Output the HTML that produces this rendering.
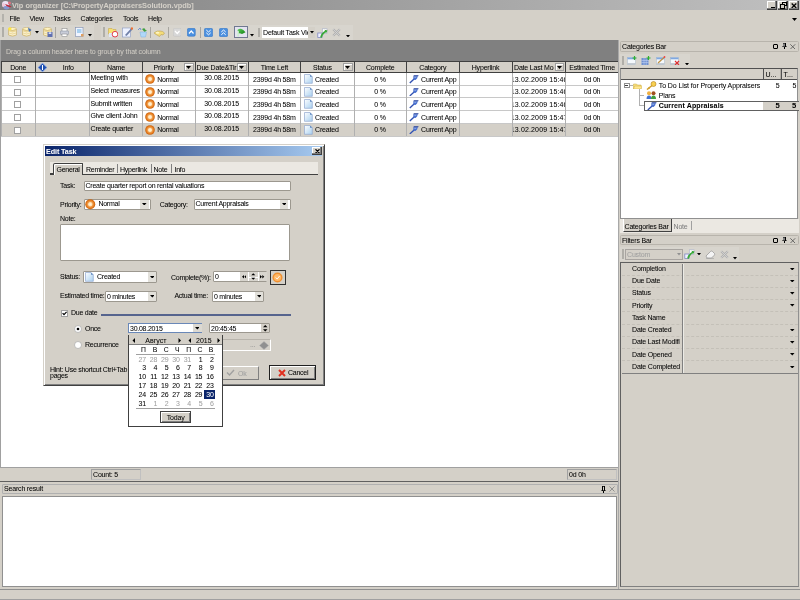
<!DOCTYPE html>
<html><head><meta charset="utf-8"><style>
html,body{margin:0;padding:0;width:800px;height:600px;overflow:hidden;background:#d4d0c8;font-family:"Liberation Sans",sans-serif;}
.a{position:absolute}
.t{position:absolute;white-space:nowrap;font-size:7px;line-height:9px;color:#000;letter-spacing:-0.18px;-webkit-text-stroke:0.04px currentColor}
#root{position:absolute;left:0;top:0;width:800px;height:600px;overflow:hidden;background:#d4d0c8;will-change:transform}
</style></head><body><div id="root">
<div class="a" style="left:0px;top:0px;width:800px;height:10px;background:linear-gradient(to right,#808080,#c0c0c0)"></div>
<svg class="a" style="left:1px;top:0.3px;" width="11" height="9.5" viewBox="0 0 11 9.5"><ellipse cx="4.5" cy="4.2" rx="3.5" ry="3.2" fill="#ece4f4"/><ellipse cx="2.5" cy="5" rx="1.5" ry="2" fill="#f0c8d8"/><ellipse cx="5.5" cy="7.6" rx="3" ry="1.8" fill="#8898d0"/><path d="M4 4Q7 4.5 10.5 6.5Q9 8 5.5 6Z" fill="#c02838"/><circle cx="8.5" cy="3" r="1.5" fill="#e07080"/></svg>
<div class="t" style="left:12px;top:1px;font-weight:bold;color:#d4d0c8;font-size:7.4px;letter-spacing:0">Vip organizer [C:\PropertyAppraisersSolution.vpdb]</div>
<div class="a" style="left:767px;top:0.5px;width:10px;height:9.5px;background:#d4d0c8;border-right:1px solid #404040;border-bottom:1px solid #404040;box-shadow:inset -1px -1px #808080, inset 1px 1px #fff;box-sizing:border-box"></div>
<div class="a" style="left:777.5px;top:0.5px;width:10px;height:9.5px;background:#d4d0c8;border-right:1px solid #404040;border-bottom:1px solid #404040;box-shadow:inset -1px -1px #808080, inset 1px 1px #fff;box-sizing:border-box"></div>
<div class="a" style="left:788.5px;top:0.5px;width:10px;height:9.5px;background:#d4d0c8;border-right:1px solid #404040;border-bottom:1px solid #404040;box-shadow:inset -1px -1px #808080, inset 1px 1px #fff;box-sizing:border-box"></div>
<div class="a" style="left:770.5px;top:6.5px;width:4px;height:1.5px;background:#000"></div>
<div class="a" style="left:781.5px;top:2px;width:5px;height:4px;border:1px solid #000;border-top-width:1.5px;box-sizing:border-box"></div>
<div class="a" style="left:779.5px;top:4px;width:5px;height:4.5px;border:1px solid #000;border-top-width:1.5px;background:#d4d0c8;box-sizing:border-box"></div>
<svg class="a" style="left:790.5px;top:2.5px;" width="6" height="5.5" viewBox="0 0 6 5.5"><path d="M0.7 0.5L5.3 5M5.3 0.5L0.7 5" stroke="#000" stroke-width="1.3"/></svg>
<div class="a" style="left:2px;top:13.5px;width:2px;height:8.5px;background:#b4b2ac"></div>
<div class="t" style="left:9.5px;top:13.5px;">File</div>
<div class="t" style="left:29.5px;top:13.5px;">View</div>
<div class="t" style="left:53.5px;top:13.5px;">Tasks</div>
<div class="t" style="left:80.5px;top:13.5px;">Categories</div>
<div class="t" style="left:123px;top:13.5px;">Tools</div>
<div class="t" style="left:148px;top:13.5px;">Help</div>
<svg class="a" style="left:792px;top:18px;" width="6" height="4" viewBox="0 0 6 4"><path d="M0 0H5L2.5 3Z" fill="#000"/></svg>
<div class="a" style="left:0px;top:25px;width:94px;height:14.5px;background:#d8d5ce"></div>
<div class="a" style="left:101px;top:25px;width:252px;height:14.5px;background:#d8d5ce"></div>
<div class="a" style="left:2px;top:27px;width:2px;height:10px;background:#b0aea8"></div>
<svg class="a" style="left:7.5px;top:27px;" width="9.5" height="10" viewBox="0 0 9.5 10"><ellipse cx="4.5" cy="2.2" rx="4" ry="1.8" fill="#fff4c0" stroke="#c8b070" stroke-width="0.6"/><path d="M0.5 2.2V8Q4.5 10.5 8.5 8V2.2Q4.5 4.8 0.5 2.2Z" fill="#ecd898" stroke="#c8b070" stroke-width="0.6"/><path d="M1 5Q4.5 7 8 5M1 7Q4.5 9 8 7" stroke="#fffbe8" stroke-width="0.7" fill="none"/><circle cx="1.8" cy="1.8" r="1.6" fill="#ffe840"/></svg>
<svg class="a" style="left:22px;top:27px;" width="10" height="10" viewBox="0 0 10 10"><ellipse cx="4.5" cy="2.2" rx="4" ry="1.8" fill="#fff4c0" stroke="#c8b070" stroke-width="0.6"/><path d="M0.5 2.2V8Q4.5 10.5 8.5 8V2.2Q4.5 4.8 0.5 2.2Z" fill="#ecd898" stroke="#c8b070" stroke-width="0.6"/><path d="M1 5Q4.5 7 8 5M1 7Q4.5 9 8 7" stroke="#fffbe8" stroke-width="0.7" fill="none"/><path d="M6 0.5L9.5 3L7 5Z" fill="#4070c0"/></svg>
<svg class="a" style="left:35px;top:31px;" width="4" height="2.5" viewBox="0 0 4 2.5"><path d="M0 0H4L2 2.5Z" fill="#000"/></svg>
<svg class="a" style="left:42.5px;top:27px;" width="10" height="10.5" viewBox="0 0 10 10.5"><ellipse cx="4.5" cy="2.2" rx="4" ry="1.8" fill="#fff4c0" stroke="#c8b070" stroke-width="0.6"/><path d="M0.5 2.2V8Q4.5 10.5 8.5 8V2.2Q4.5 4.8 0.5 2.2Z" fill="#ecd898" stroke="#c8b070" stroke-width="0.6"/><path d="M1 5Q4.5 7 8 5M1 7Q4.5 9 8 7" stroke="#fffbe8" stroke-width="0.7" fill="none"/><rect x="4.5" y="5" width="5" height="5" fill="#6070b0"/><rect x="5.7" y="5.3" width="2.6" height="1.6" fill="#e0e8ff"/></svg>
<div class="a" style="left:55px;top:26.5px;width:1.2px;height:11.5px;background:#a8a6a0"></div>
<svg class="a" style="left:60px;top:28px;" width="9" height="9" viewBox="0 0 9 9"><rect x="2" y="0.5" width="5" height="3" fill="#fff" stroke="#909090" stroke-width="0.6"/><rect x="0.3" y="3" width="8.4" height="3.5" rx="1" fill="#c8ccd8" stroke="#8890a0" stroke-width="0.6"/><rect x="2" y="6" width="5" height="2.5" fill="#fff" stroke="#909090" stroke-width="0.6"/></svg>
<svg class="a" style="left:75px;top:27px;" width="9" height="10" viewBox="0 0 9 10"><rect x="0.5" y="0.5" width="7.5" height="9" fill="#f0f4ff" stroke="#8090b0" stroke-width="0.6"/><rect x="2" y="2" width="4.5" height="4" fill="#a8d0f0"/><rect x="6" y="7" width="2.5" height="2.5" fill="#e0a060"/></svg>
<svg class="a" style="left:88px;top:34px;" width="4" height="2.5" viewBox="0 0 4 2.5"><path d="M0 0H4L2 2.5Z" fill="#000"/></svg>
<div class="a" style="left:103px;top:27px;width:2px;height:10px;background:#b0aea8"></div>
<svg class="a" style="left:108px;top:27px;" width="10" height="10.5" viewBox="0 0 10 10.5"><path d="M0.5 1.5H4L5 2.5H8V7H0.5Z" fill="#f8e070" stroke="#c0a040" stroke-width="0.5"/><rect x="1" y="6" width="3" height="4" fill="#e0e8f8"/><circle cx="7" cy="7.2" r="2.8" fill="#fff" stroke="#e04050" stroke-width="1"/></svg>
<svg class="a" style="left:122px;top:27px;" width="11" height="10.5" viewBox="0 0 11 10.5"><rect x="0.5" y="1" width="8" height="9" fill="#eef2ff" stroke="#8898c0" stroke-width="0.6"/><path d="M3 8L9 1.5L10.5 2.5L4.5 9Z" fill="#7080a8"/><circle cx="10" cy="1.5" r="1.2" fill="#f07030"/></svg>
<svg class="a" style="left:136.5px;top:27px;" width="11" height="10.5" viewBox="0 0 11 10.5"><path d="M1 3L3 1L4 3" stroke="#7090d0" stroke-width="1" fill="none"/><path d="M5 2Q8 0 8.5 3L10 3.5L7.5 5" fill="#40a040"/><path d="M3 5H9.5L8.5 10H4Z" fill="#b0d8f8" stroke="#80b0e0" stroke-width="0.5"/></svg>
<div class="a" style="left:150px;top:26.5px;width:1.2px;height:11.5px;background:#a8a6a0"></div>
<svg class="a" style="left:154px;top:29.5px;" width="11" height="7" viewBox="0 0 11 7"><path d="M0.5 2.5Q3 0.5 6 1Q9 1 10.5 3L9 5L7 4.5L5.5 6.5Q3 5 0.5 3.5Z" fill="#f4dc78" stroke="#b8a050" stroke-width="0.6"/><ellipse cx="3.5" cy="2.8" rx="1.8" ry="1" fill="#fff4c0"/></svg>
<div class="a" style="left:168px;top:26.5px;width:1.2px;height:11.5px;background:#a8a6a0"></div>
<svg class="a" style="left:172.5px;top:28px;" width="8.5" height="8.5" viewBox="0 0 8.5 8.5"><rect x="0.3" y="0.3" width="8" height="8" rx="1.5" fill="#d8d8d8" stroke="#c0c0c0" stroke-width="0.5"/><path d="M2 3L4.25 5.5L6.5 3" stroke="#fff" stroke-width="1.2" fill="none"/></svg>
<svg class="a" style="left:187px;top:28px;" width="8.5" height="8.5" viewBox="0 0 8.5 8.5"><rect x="0.3" y="0.3" width="8" height="8" rx="1.5" fill="#4a90e0" stroke="#3070c0" stroke-width="0.5"/><path d="M2 5.5L4.25 3L6.5 5.5" stroke="#fff" stroke-width="1.2" fill="none"/></svg>
<div class="a" style="left:200px;top:26.5px;width:1.2px;height:11.5px;background:#a8a6a0"></div>
<svg class="a" style="left:204px;top:28px;" width="9" height="9" viewBox="0 0 9 9"><rect x="0.3" y="0.3" width="8.4" height="8.4" rx="1.5" fill="#4a90e0" stroke="#3070c0" stroke-width="0.5"/><path d="M2.3 2L4.5 4L6.7 2M2.3 4.8L4.5 6.8L6.7 4.8" stroke="#fff" stroke-width="1" fill="none"/></svg>
<svg class="a" style="left:218.5px;top:28px;" width="9" height="9" viewBox="0 0 9 9"><rect x="0.3" y="0.3" width="8.4" height="8.4" rx="1.5" fill="#4a90e0" stroke="#3070c0" stroke-width="0.5"/><path d="M2.3 4L4.5 2L6.7 4M2.3 6.8L4.5 4.8L6.7 6.8" stroke="#fff" stroke-width="1" fill="none"/></svg>
<div class="a" style="left:233.8px;top:25.8px;width:14px;height:12.5px;background:#e4e4f0;border:1px solid #707890;box-sizing:border-box"></div>
<svg class="a" style="left:235.5px;top:27.5px;" width="11" height="9" viewBox="0 0 11 9"><defs><linearGradient id="fg" x1="0" y1="0" x2="1" y2="1"><stop offset="0" stop-color="#60d060"/><stop offset="1" stop-color="#108010"/></linearGradient></defs><path d="M1.5 2Q3 0.5 5 0.8Q7.5 1.5 9.5 4.2L6 6Q4 5 2.5 5.5Z" fill="url(#fg)"/><path d="M2 2.5Q1 5 1.5 8.5H3Q2.5 5 3 3.5Z" fill="#c8f0c8"/></svg>
<svg class="a" style="left:250px;top:34px;" width="4" height="2.5" viewBox="0 0 4 2.5"><path d="M0 0H4L2 2.5Z" fill="#000"/></svg>
<div class="a" style="left:258px;top:27.5px;width:2px;height:9.5px;background:#b0aea8"></div>
<div class="a" style="left:262px;top:27px;width:52.5px;height:11px;background:#fff"></div>
<div class="a" style="left:308px;top:27px;width:6.5px;height:11px;background:#d4d0c8"></div>
<svg class="a" style="left:309.5px;top:31px;" width="4" height="2.5" viewBox="0 0 4 2.5"><path d="M0 0H4L2 2.5Z" fill="#000"/></svg>
<div class="t" style="left:263px;top:28px;width:45px;overflow:hidden">Default Task View</div>
<svg class="a" style="left:316.5px;top:27.5px;" width="11" height="10" viewBox="0 0 11 10"><rect x="5.5" y="0.8" width="4.5" height="4.5" fill="#fff" stroke="#a8b0c8" stroke-width="0.6"/><rect x="0.8" y="5" width="4.2" height="4.5" fill="#eef0ff" stroke="#8088c0" stroke-width="0.8"/><path d="M4 9.5Q5 5 9.5 3" stroke="#38a838" stroke-width="1.8" fill="none"/><path d="M7.5 1.8L10.5 2.5L9 5.3Z" fill="#38a838"/></svg>
<svg class="a" style="left:331.5px;top:27.5px;" width="9" height="9" viewBox="0 0 9 9"><path d="M1.2 1.2L7.8 7.8M7.8 1.2L1.2 7.8" stroke="#b0b0b0" stroke-width="2.2"/><path d="M1.2 1.2L7.8 7.8M7.8 1.2L1.2 7.8" stroke="#d8d8d8" stroke-width="0.8"/></svg>
<svg class="a" style="left:345.5px;top:34.5px;" width="4" height="2.5" viewBox="0 0 4 2.5"><path d="M0 0H4L2 2.5Z" fill="#000"/></svg>
<div class="a" style="left:0px;top:40px;width:618.5px;height:21px;background:#808080"></div>
<div class="t" style="left:6px;top:47px;color:#d0ccc4;letter-spacing:-0.12px">Drag a column header here to group by that column</div>
<div class="a" style="left:0px;top:61px;width:619px;height:420.5px;background:#fff"></div>
<div class="a" style="left:0px;top:40px;width:1px;height:442px;background:#a0a0a0"></div>
<div class="a" style="left:1px;top:61px;width:617.5px;height:11.5px;background:#d4d0c8;border-top:1px solid #404040;border-bottom:1px solid #404040;box-sizing:border-box"></div>
<div class="a" style="left:0.5px;top:61px;width:1px;height:11.5px;background:#404040"></div>
<div class="a" style="left:35.0px;top:61px;width:1px;height:11.5px;background:#404040"></div>
<div class="a" style="left:89.0px;top:61px;width:1px;height:11.5px;background:#404040"></div>
<div class="a" style="left:142.0px;top:61px;width:1px;height:11.5px;background:#404040"></div>
<div class="a" style="left:194.5px;top:61px;width:1px;height:11.5px;background:#404040"></div>
<div class="a" style="left:247.5px;top:61px;width:1px;height:11.5px;background:#404040"></div>
<div class="a" style="left:300.3px;top:61px;width:1px;height:11.5px;background:#404040"></div>
<div class="a" style="left:353.5px;top:61px;width:1px;height:11.5px;background:#404040"></div>
<div class="a" style="left:406.0px;top:61px;width:1px;height:11.5px;background:#404040"></div>
<div class="a" style="left:458.5px;top:61px;width:1px;height:11.5px;background:#404040"></div>
<div class="a" style="left:511.5px;top:61px;width:1px;height:11.5px;background:#404040"></div>
<div class="a" style="left:565.0px;top:61px;width:1px;height:11.5px;background:#404040"></div>
<div class="a" style="left:618.0px;top:61px;width:1px;height:11.5px;background:#404040"></div>
<div class="a" style="left:1px;top:123.3px;width:617.5px;height:12.7px;background:#d4d0c8"></div>
<div class="a" style="left:1px;top:84.7px;width:617.5px;height:1px;background:#c8c8c8"></div>
<div class="a" style="left:1px;top:97.4px;width:617.5px;height:1px;background:#c8c8c8"></div>
<div class="a" style="left:1px;top:110.1px;width:617.5px;height:1px;background:#c8c8c8"></div>
<div class="a" style="left:1px;top:122.8px;width:617.5px;height:1px;background:#c8c8c8"></div>
<div class="a" style="left:1px;top:135.5px;width:617.5px;height:1px;background:#c8c8c8"></div>
<div class="a" style="left:0.5px;top:72.5px;width:1px;height:63.5px;background:#b0b0b0"></div>
<div class="a" style="left:35.0px;top:72.5px;width:1px;height:63.5px;background:#b0b0b0"></div>
<div class="a" style="left:89.0px;top:72.5px;width:1px;height:63.5px;background:#b0b0b0"></div>
<div class="a" style="left:142.0px;top:72.5px;width:1px;height:63.5px;background:#b0b0b0"></div>
<div class="a" style="left:194.5px;top:72.5px;width:1px;height:63.5px;background:#b0b0b0"></div>
<div class="a" style="left:247.5px;top:72.5px;width:1px;height:63.5px;background:#b0b0b0"></div>
<div class="a" style="left:300.3px;top:72.5px;width:1px;height:63.5px;background:#b0b0b0"></div>
<div class="a" style="left:353.5px;top:72.5px;width:1px;height:63.5px;background:#b0b0b0"></div>
<div class="a" style="left:406.0px;top:72.5px;width:1px;height:63.5px;background:#b0b0b0"></div>
<div class="a" style="left:458.5px;top:72.5px;width:1px;height:63.5px;background:#b0b0b0"></div>
<div class="a" style="left:511.5px;top:72.5px;width:1px;height:63.5px;background:#b0b0b0"></div>
<div class="a" style="left:565.0px;top:72.5px;width:1px;height:63.5px;background:#b0b0b0"></div>
<div class="a" style="left:618.0px;top:72.5px;width:1px;height:63.5px;background:#b0b0b0"></div>
<div class="a" style="left:0.5px;top:61px;width:1px;height:11.5px;background:#404040"></div>
<div class="t" style="left:1px;top:62.7px;width:34.5px;text-align:center;">Done</div>
<svg class="a" style="left:38px;top:63px;" width="9" height="9" viewBox="0 0 9 9"><path d="M4.5 0L9 4.5L4.5 9L0 4.5Z" fill="#2050b0" stroke="#a8c0f0" stroke-width="0.8"/><rect x="4" y="2" width="1" height="5" fill="#fff"/></svg>
<div class="t" style="left:47px;top:62.7px;width:42.5px;text-align:center;">Info</div>
<div class="t" style="left:89.5px;top:62.7px;width:53.0px;text-align:center;">Name</div>
<div class="t" style="left:142.5px;top:62.7px;width:42.5px;text-align:center;">Priority</div>
<div class="a" style="left:184px;top:63.3px;width:9.5px;height:7.5px;background:#d4d0c8;border:1px solid #a0a0a0;box-shadow:inset 1px 1px #fff;box-sizing:border-box"></div>
<svg class="a" style="left:186.3px;top:66px;" width="5" height="2.5" viewBox="0 0 5 2.5"><path d="M0 0H5L2.5 3Z" fill="#000"/></svg>
<div class="t" style="left:195px;top:62.7px;width:43px;text-align:center;">Due Date&amp;Tir</div>
<div class="a" style="left:237px;top:63.3px;width:9.5px;height:7.5px;background:#d4d0c8;border:1px solid #a0a0a0;box-shadow:inset 1px 1px #fff;box-sizing:border-box"></div>
<svg class="a" style="left:239.3px;top:66px;" width="5" height="2.5" viewBox="0 0 5 2.5"><path d="M0 0H5L2.5 3Z" fill="#000"/></svg>
<div class="t" style="left:248px;top:62.7px;width:52.80000000000001px;text-align:center;">Time Left</div>
<div class="t" style="left:300.8px;top:62.7px;width:43.19999999999999px;text-align:center;">Status</div>
<div class="a" style="left:343px;top:63.3px;width:9.5px;height:7.5px;background:#d4d0c8;border:1px solid #a0a0a0;box-shadow:inset 1px 1px #fff;box-sizing:border-box"></div>
<svg class="a" style="left:345.3px;top:66px;" width="5" height="2.5" viewBox="0 0 5 2.5"><path d="M0 0H5L2.5 3Z" fill="#000"/></svg>
<div class="t" style="left:354px;top:62.7px;width:52.5px;text-align:center;">Complete</div>
<div class="t" style="left:406.5px;top:62.7px;width:52.5px;text-align:center;">Category</div>
<div class="t" style="left:459px;top:62.7px;width:53px;text-align:center;">Hyperlink</div>
<div class="t" style="left:512px;top:62.7px;width:43.5px;text-align:center;">Date Last Mo</div>
<div class="a" style="left:554.5px;top:63.3px;width:9.5px;height:7.5px;background:#d4d0c8;border:1px solid #a0a0a0;box-shadow:inset 1px 1px #fff;box-sizing:border-box"></div>
<svg class="a" style="left:556.8px;top:66px;" width="5" height="2.5" viewBox="0 0 5 2.5"><path d="M0 0H5L2.5 3Z" fill="#000"/></svg>
<div class="t" style="left:565.5px;top:62.7px;width:53.0px;text-align:center;">Estimated Time</div>
<div class="a" style="left:14px;top:75.8px;width:7px;height:7px;background:#fff;border:1px solid #a0a0a0;box-sizing:border-box"></div>
<div class="t" style="left:90.5px;top:73.2px;">Meeting with</div>
<svg class="a" style="left:145px;top:74.0px;" width="10" height="10" viewBox="0 0 10 10"><defs><radialGradient id="pg" cx="0.5" cy="0.5" r="0.5"><stop offset="0" stop-color="#fff8e8"/><stop offset="0.35" stop-color="#ffe0b0"/><stop offset="0.5" stop-color="#f0a050"/><stop offset="0.85" stop-color="#e07010"/><stop offset="1" stop-color="#c06010"/></radialGradient></defs><circle cx="5" cy="5" r="4.8" fill="url(#pg)"/></svg>
<div class="t" style="left:157.2px;top:74.5px;">Normal</div>
<div class="t" style="left:195px;top:73.2px;width:53.5px;text-align:center;letter-spacing:0">30.08.2015</div>
<div class="t" style="left:248px;top:74.5px;width:52.80000000000001px;text-align:center;">2399d 4h 58m</div>
<svg class="a" style="left:304px;top:74.0px;" width="9" height="10" viewBox="0 0 9 10"><defs><linearGradient id="dg" x1="0" y1="0" x2="1" y2="1"><stop offset="0" stop-color="#ffffff"/><stop offset="1" stop-color="#a8d0f0"/></linearGradient></defs><path d="M0.5 0.5H6L8.3 2.8V9.3H0.5Z" fill="url(#dg)" stroke="#90a8d0" stroke-width="0.7"/><path d="M6 0.5V2.8H8.3" fill="#6088c0"/></svg>
<div class="t" style="left:315px;top:74.5px;">Created</div>
<div class="t" style="left:354px;top:74.5px;width:52px;text-align:center;">0 %</div>
<svg class="a" style="left:408.7px;top:75.0px;" width="10" height="8.5" viewBox="0 0 10 8.5"><path d="M0.8 7.9L5.6 3.4" stroke="#3050b0" stroke-width="1.4"/><path d="M4.3 1.2H9.3L7.8 2.6H8.9L6.6 5L4.4 4.6Z" fill="#4870d0"/><path d="M4.8 0.3H9.6L9.1 1.2H4.4Z" fill="#203c98"/><path d="M5.3 2.4H7.2" stroke="#b8d0f8" stroke-width="0.6"/></svg>
<div class="t" style="left:421px;top:74.5px;">Current App</div>
<div class="t" style="left:512.5px;top:74.5px;width:52.5px;overflow:hidden;text-indent:-1.8px;letter-spacing:0.15px">13.02.2009 15:46</div>
<div class="t" style="left:565.5px;top:74.5px;width:53.0px;text-align:center;">0d 0h</div>
<div class="a" style="left:14px;top:88.5px;width:7px;height:7px;background:#fff;border:1px solid #a0a0a0;box-sizing:border-box"></div>
<div class="t" style="left:90.5px;top:85.9px;">Select measures</div>
<svg class="a" style="left:145px;top:86.7px;" width="10" height="10" viewBox="0 0 10 10"><defs><radialGradient id="pg" cx="0.5" cy="0.5" r="0.5"><stop offset="0" stop-color="#fff8e8"/><stop offset="0.35" stop-color="#ffe0b0"/><stop offset="0.5" stop-color="#f0a050"/><stop offset="0.85" stop-color="#e07010"/><stop offset="1" stop-color="#c06010"/></radialGradient></defs><circle cx="5" cy="5" r="4.8" fill="url(#pg)"/></svg>
<div class="t" style="left:157.2px;top:87.2px;">Normal</div>
<div class="t" style="left:195px;top:85.9px;width:53.5px;text-align:center;letter-spacing:0">30.08.2015</div>
<div class="t" style="left:248px;top:87.2px;width:52.80000000000001px;text-align:center;">2399d 4h 58m</div>
<svg class="a" style="left:304px;top:86.7px;" width="9" height="10" viewBox="0 0 9 10"><defs><linearGradient id="dg" x1="0" y1="0" x2="1" y2="1"><stop offset="0" stop-color="#ffffff"/><stop offset="1" stop-color="#a8d0f0"/></linearGradient></defs><path d="M0.5 0.5H6L8.3 2.8V9.3H0.5Z" fill="url(#dg)" stroke="#90a8d0" stroke-width="0.7"/><path d="M6 0.5V2.8H8.3" fill="#6088c0"/></svg>
<div class="t" style="left:315px;top:87.2px;">Created</div>
<div class="t" style="left:354px;top:87.2px;width:52px;text-align:center;">0 %</div>
<svg class="a" style="left:408.7px;top:87.7px;" width="10" height="8.5" viewBox="0 0 10 8.5"><path d="M0.8 7.9L5.6 3.4" stroke="#3050b0" stroke-width="1.4"/><path d="M4.3 1.2H9.3L7.8 2.6H8.9L6.6 5L4.4 4.6Z" fill="#4870d0"/><path d="M4.8 0.3H9.6L9.1 1.2H4.4Z" fill="#203c98"/><path d="M5.3 2.4H7.2" stroke="#b8d0f8" stroke-width="0.6"/></svg>
<div class="t" style="left:421px;top:87.2px;">Current App</div>
<div class="t" style="left:512.5px;top:87.2px;width:52.5px;overflow:hidden;text-indent:-1.8px;letter-spacing:0.15px">13.02.2009 15:46</div>
<div class="t" style="left:565.5px;top:87.2px;width:53.0px;text-align:center;">0d 0h</div>
<div class="a" style="left:14px;top:101.2px;width:7px;height:7px;background:#fff;border:1px solid #a0a0a0;box-sizing:border-box"></div>
<div class="t" style="left:90.5px;top:98.60000000000001px;">Submit written</div>
<svg class="a" style="left:145px;top:99.4px;" width="10" height="10" viewBox="0 0 10 10"><defs><radialGradient id="pg" cx="0.5" cy="0.5" r="0.5"><stop offset="0" stop-color="#fff8e8"/><stop offset="0.35" stop-color="#ffe0b0"/><stop offset="0.5" stop-color="#f0a050"/><stop offset="0.85" stop-color="#e07010"/><stop offset="1" stop-color="#c06010"/></radialGradient></defs><circle cx="5" cy="5" r="4.8" fill="url(#pg)"/></svg>
<div class="t" style="left:157.2px;top:99.9px;">Normal</div>
<div class="t" style="left:195px;top:98.60000000000001px;width:53.5px;text-align:center;letter-spacing:0">30.08.2015</div>
<div class="t" style="left:248px;top:99.9px;width:52.80000000000001px;text-align:center;">2399d 4h 58m</div>
<svg class="a" style="left:304px;top:99.4px;" width="9" height="10" viewBox="0 0 9 10"><defs><linearGradient id="dg" x1="0" y1="0" x2="1" y2="1"><stop offset="0" stop-color="#ffffff"/><stop offset="1" stop-color="#a8d0f0"/></linearGradient></defs><path d="M0.5 0.5H6L8.3 2.8V9.3H0.5Z" fill="url(#dg)" stroke="#90a8d0" stroke-width="0.7"/><path d="M6 0.5V2.8H8.3" fill="#6088c0"/></svg>
<div class="t" style="left:315px;top:99.9px;">Created</div>
<div class="t" style="left:354px;top:99.9px;width:52px;text-align:center;">0 %</div>
<svg class="a" style="left:408.7px;top:100.4px;" width="10" height="8.5" viewBox="0 0 10 8.5"><path d="M0.8 7.9L5.6 3.4" stroke="#3050b0" stroke-width="1.4"/><path d="M4.3 1.2H9.3L7.8 2.6H8.9L6.6 5L4.4 4.6Z" fill="#4870d0"/><path d="M4.8 0.3H9.6L9.1 1.2H4.4Z" fill="#203c98"/><path d="M5.3 2.4H7.2" stroke="#b8d0f8" stroke-width="0.6"/></svg>
<div class="t" style="left:421px;top:99.9px;">Current App</div>
<div class="t" style="left:512.5px;top:99.9px;width:52.5px;overflow:hidden;text-indent:-1.8px;letter-spacing:0.15px">13.02.2009 15:46</div>
<div class="t" style="left:565.5px;top:99.9px;width:53.0px;text-align:center;">0d 0h</div>
<div class="a" style="left:14px;top:113.89999999999999px;width:7px;height:7px;background:#fff;border:1px solid #a0a0a0;box-sizing:border-box"></div>
<div class="t" style="left:90.5px;top:111.3px;">Give client John</div>
<svg class="a" style="left:145px;top:112.1px;" width="10" height="10" viewBox="0 0 10 10"><defs><radialGradient id="pg" cx="0.5" cy="0.5" r="0.5"><stop offset="0" stop-color="#fff8e8"/><stop offset="0.35" stop-color="#ffe0b0"/><stop offset="0.5" stop-color="#f0a050"/><stop offset="0.85" stop-color="#e07010"/><stop offset="1" stop-color="#c06010"/></radialGradient></defs><circle cx="5" cy="5" r="4.8" fill="url(#pg)"/></svg>
<div class="t" style="left:157.2px;top:112.6px;">Normal</div>
<div class="t" style="left:195px;top:111.3px;width:53.5px;text-align:center;letter-spacing:0">30.08.2015</div>
<div class="t" style="left:248px;top:112.6px;width:52.80000000000001px;text-align:center;">2399d 4h 58m</div>
<svg class="a" style="left:304px;top:112.1px;" width="9" height="10" viewBox="0 0 9 10"><defs><linearGradient id="dg" x1="0" y1="0" x2="1" y2="1"><stop offset="0" stop-color="#ffffff"/><stop offset="1" stop-color="#a8d0f0"/></linearGradient></defs><path d="M0.5 0.5H6L8.3 2.8V9.3H0.5Z" fill="url(#dg)" stroke="#90a8d0" stroke-width="0.7"/><path d="M6 0.5V2.8H8.3" fill="#6088c0"/></svg>
<div class="t" style="left:315px;top:112.6px;">Created</div>
<div class="t" style="left:354px;top:112.6px;width:52px;text-align:center;">0 %</div>
<svg class="a" style="left:408.7px;top:113.1px;" width="10" height="8.5" viewBox="0 0 10 8.5"><path d="M0.8 7.9L5.6 3.4" stroke="#3050b0" stroke-width="1.4"/><path d="M4.3 1.2H9.3L7.8 2.6H8.9L6.6 5L4.4 4.6Z" fill="#4870d0"/><path d="M4.8 0.3H9.6L9.1 1.2H4.4Z" fill="#203c98"/><path d="M5.3 2.4H7.2" stroke="#b8d0f8" stroke-width="0.6"/></svg>
<div class="t" style="left:421px;top:112.6px;">Current App</div>
<div class="t" style="left:512.5px;top:112.6px;width:52.5px;overflow:hidden;text-indent:-1.8px;letter-spacing:0.15px">13.02.2009 15:47</div>
<div class="t" style="left:565.5px;top:112.6px;width:53.0px;text-align:center;">0d 0h</div>
<div class="a" style="left:14px;top:126.6px;width:7px;height:7px;background:#fff;border:1px solid #a0a0a0;box-sizing:border-box"></div>
<div class="t" style="left:90.5px;top:124.0px;">Create quarter</div>
<svg class="a" style="left:145px;top:124.8px;" width="10" height="10" viewBox="0 0 10 10"><defs><radialGradient id="pg" cx="0.5" cy="0.5" r="0.5"><stop offset="0" stop-color="#fff8e8"/><stop offset="0.35" stop-color="#ffe0b0"/><stop offset="0.5" stop-color="#f0a050"/><stop offset="0.85" stop-color="#e07010"/><stop offset="1" stop-color="#c06010"/></radialGradient></defs><circle cx="5" cy="5" r="4.8" fill="url(#pg)"/></svg>
<div class="t" style="left:157.2px;top:125.30000000000001px;">Normal</div>
<div class="t" style="left:195px;top:124.0px;width:53.5px;text-align:center;letter-spacing:0">30.08.2015</div>
<div class="t" style="left:248px;top:125.30000000000001px;width:52.80000000000001px;text-align:center;">2399d 4h 58m</div>
<svg class="a" style="left:304px;top:124.8px;" width="9" height="10" viewBox="0 0 9 10"><defs><linearGradient id="dg" x1="0" y1="0" x2="1" y2="1"><stop offset="0" stop-color="#ffffff"/><stop offset="1" stop-color="#a8d0f0"/></linearGradient></defs><path d="M0.5 0.5H6L8.3 2.8V9.3H0.5Z" fill="url(#dg)" stroke="#90a8d0" stroke-width="0.7"/><path d="M6 0.5V2.8H8.3" fill="#6088c0"/></svg>
<div class="t" style="left:315px;top:125.30000000000001px;">Created</div>
<div class="t" style="left:354px;top:125.30000000000001px;width:52px;text-align:center;">0 %</div>
<svg class="a" style="left:408.7px;top:125.8px;" width="10" height="8.5" viewBox="0 0 10 8.5"><path d="M0.8 7.9L5.6 3.4" stroke="#3050b0" stroke-width="1.4"/><path d="M4.3 1.2H9.3L7.8 2.6H8.9L6.6 5L4.4 4.6Z" fill="#4870d0"/><path d="M4.8 0.3H9.6L9.1 1.2H4.4Z" fill="#203c98"/><path d="M5.3 2.4H7.2" stroke="#b8d0f8" stroke-width="0.6"/></svg>
<div class="t" style="left:421px;top:125.30000000000001px;">Current App</div>
<div class="t" style="left:512.5px;top:125.30000000000001px;width:52.5px;overflow:hidden;text-indent:-1.8px;letter-spacing:0.15px">13.02.2009 15:47</div>
<div class="t" style="left:565.5px;top:125.30000000000001px;width:53.0px;text-align:center;">0d 0h</div>
<div class="a" style="left:0px;top:467px;width:619px;height:14.5px;background:#d4d0c8;border-top:1px solid #a0a0a0;border-bottom:1px solid #606060;box-sizing:border-box"></div>
<div class="a" style="left:91px;top:469px;width:50px;height:10.5px;border:1px solid #a0a0a0;border-right-color:#c0c0c0;border-bottom-color:#c0c0c0;box-sizing:border-box"></div>
<div class="t" style="left:93px;top:470.3px;">Count: 5</div>
<div class="a" style="left:567px;top:469px;width:49.5px;height:10.5px;border:1px solid #a0a0a0;border-right-color:#c0c0c0;border-bottom-color:#c0c0c0;box-sizing:border-box"></div>
<div class="t" style="left:569px;top:470.3px;">0d 0h</div>
<div class="a" style="left:2px;top:483.5px;width:615.5px;height:10.5px;background:#d4d0c8;border:1px solid #b0b0b0;border-radius:1px;box-sizing:border-box"></div>
<div class="t" style="left:4px;top:484px;">Search result</div>
<svg class="a" style="left:600.5px;top:485.5px;" width="5" height="7" viewBox="0 0 5 7"><path d="M1 0H4V4.5H5V5H3V7H2V5H0V4.5H1Z" fill="#000"/><rect x="2" y="0.8" width="1" height="3.5" fill="#d4d0c8"/></svg>
<svg class="a" style="left:609px;top:486px;" width="6" height="6" viewBox="0 0 6 6"><path d="M0.5 0.5L5.5 5.5M5.5 0.5L0.5 5.5" stroke="#808080" stroke-width="0.8"/></svg>
<div class="a" style="left:2px;top:495.5px;width:614.5px;height:91.3px;background:#fff;border:1px solid #909090;box-sizing:border-box"></div>
<div class="a" style="left:0px;top:589px;width:800px;height:1px;background:#909090"></div>
<div class="a" style="left:0px;top:599px;width:800px;height:1px;background:#a0a0a0"></div>
<div class="a" style="left:618.3px;top:40px;width:1px;height:549px;background:#a8a8a8"></div>
<div class="a" style="left:620px;top:41px;width:178.5px;height:10.5px;background:#d4d0c8;border:1px solid #b8b4ac;border-radius:1.5px;box-sizing:border-box"></div>
<div class="t" style="left:622px;top:41.8px;">Categories Bar</div>
<div class="a" style="left:773.0px;top:43.5px;width:5px;height:5px;border:1px solid #000;border-radius:1px;box-sizing:border-box"></div>
<svg class="a" style="left:781.5px;top:43px;" width="5" height="6" viewBox="0 0 5 6"><path d="M1 0H4V3.5H5V4H3V6H2V4H0V3.5H1Z" fill="#000"/><rect x="1.5" y="0.5" width="1" height="3" fill="#fff"/></svg>
<svg class="a" style="left:790.0px;top:43.5px;" width="5.5" height="5.5" viewBox="0 0 5.5 5.5"><path d="M0.3 0.3L5.2 5.2M5.2 0.3L0.3 5.2" stroke="#505050" stroke-width="0.8"/></svg>
<div class="a" style="left:620px;top:53.5px;width:69.5px;height:13px;background:#d8d5ce"></div>
<div class="a" style="left:622px;top:55.5px;width:2px;height:9px;background:#b0aea8"></div>
<svg class="a" style="left:627px;top:55.5px;" width="10" height="9" viewBox="0 0 10 9"><rect x="0.5" y="1.5" width="8" height="7" fill="#f4f8fc" stroke="#a8b8c8" stroke-width="0.5"/><rect x="0.5" y="1.5" width="8" height="1.8" fill="#80a8e0"/><rect x="0.5" y="7.2" width="8" height="1.3" fill="#b8c0c8"/><path d="M7.5 0V4M5.5 2H9.5" stroke="#30b030" stroke-width="1.2"/></svg>
<svg class="a" style="left:641px;top:55.5px;" width="10" height="9.5" viewBox="0 0 10 9.5"><rect x="0.5" y="2" width="7" height="7" fill="#7090d0"/><path d="M0.5 4.5H7.5M0.5 6.5H7.5M3 2V9M5.2 2V9" stroke="#c8d8f8" stroke-width="0.5"/><path d="M7.5 0V4M5.5 2H9.5" stroke="#30b030" stroke-width="1.2"/></svg>
<svg class="a" style="left:655.7px;top:55.5px;" width="10" height="9" viewBox="0 0 10 9"><rect x="0.5" y="1.5" width="8" height="7" fill="#f4f8fc" stroke="#a8b8c8" stroke-width="0.5"/><rect x="0.5" y="1.5" width="8" height="1.8" fill="#80a8e0"/><rect x="0.5" y="7.2" width="8" height="1.3" fill="#b8c0c8"/><path d="M2 7L8 1.5" stroke="#c09040" stroke-width="1.2"/><circle cx="8.5" cy="1" r="0.9" fill="#f04040"/></svg>
<svg class="a" style="left:670.3px;top:55.5px;" width="10" height="9.5" viewBox="0 0 10 9.5"><rect x="0.5" y="1.5" width="8" height="7" fill="#f4f8fc" stroke="#a8b8c8" stroke-width="0.5"/><rect x="0.5" y="1.5" width="8" height="1.8" fill="#80a8e0"/><rect x="0.5" y="7.2" width="8" height="1.3" fill="#b8c0c8"/><path d="M5 5L9 9M9 5L5 9" stroke="#e03030" stroke-width="1.1"/></svg>
<svg class="a" style="left:684.5px;top:62.5px;" width="4" height="2.5" viewBox="0 0 4 2.5"><path d="M0 0H4L2 2.5Z" fill="#000"/></svg>
<div class="a" style="left:620.3px;top:68.3px;width:178.2px;height:150.7px;background:#fff;border:1px solid #909090;border-top-color:#505050;box-sizing:border-box"></div>
<div class="a" style="left:621.3px;top:69.3px;width:176.2px;height:10.3px;background:#d4d0c8;border-bottom:1px solid #505050;box-sizing:border-box"></div>
<div class="a" style="left:762.8px;top:69.3px;width:1px;height:10px;background:#505050"></div>
<div class="a" style="left:780px;top:69.3px;width:1px;height:10px;background:#505050;border-left:1px solid #b0aca4"></div>
<div class="t" style="left:765.5px;top:69.5px;letter-spacing:0">U...</div>
<div class="t" style="left:783.5px;top:69.5px;letter-spacing:0">T...</div>
<div class="a" style="left:624px;top:82.5px;width:5.5px;height:5.5px;background:#fff;border:0.8px solid #909090;box-sizing:border-box"></div>
<div class="a" style="left:625.2px;top:85px;width:3.2px;height:0.8px;background:#404040"></div>
<div class="a" style="left:629.5px;top:85px;width:3px;height:1px;background:#b0b0b0"></div>
<svg class="a" style="left:632.5px;top:82.5px;" width="9.5" height="6.5" viewBox="0 0 9.5 6.5"><path d="M0.5 1H3.5L4.5 2H8V6H0.5Z" fill="#f8e080" stroke="#c8a840" stroke-width="0.5"/><path d="M1.5 3H9.5L8 6H0.5Z" fill="#ffe890" stroke="#c8a840" stroke-width="0.5"/></svg>
<svg class="a" style="left:645.5px;top:81px;" width="11" height="9" viewBox="0 0 11 9"><circle cx="7.5" cy="3" r="2.5" fill="#f8d050" stroke="#b08020" stroke-width="0.6"/><path d="M6 4.5L1 8.5" stroke="#d0a030" stroke-width="1.6"/><path d="M2.5 6.5L3.5 8" stroke="#d0a030" stroke-width="1"/></svg>
<div class="t" style="left:658.8px;top:80.6px;letter-spacing:-0.1px">To Do List for Property Appraisers</div>
<div class="t" style="left:775.8px;top:80.6px;">5</div>
<div class="t" style="left:792.5px;top:80.6px;">5</div>
<div class="a" style="left:638.5px;top:88.5px;width:0.8px;height:16.5px;background:#b0b0b0"></div>
<div class="a" style="left:638.5px;top:94.5px;width:5px;height:0.8px;background:#b0b0b0"></div>
<div class="a" style="left:638.5px;top:105px;width:5.5px;height:0.8px;background:#b0b0b0"></div>
<svg class="a" style="left:646px;top:91px;" width="10.5" height="8" viewBox="0 0 10.5 8"><circle cx="3" cy="2.2" r="2" fill="#f0b040"/><path d="M0.5 8Q0.5 4.5 3 4.5Q5.5 4.5 5.5 8Z" fill="#4070d0"/><circle cx="7.5" cy="2.2" r="2" fill="#a05020"/><path d="M5 8Q5 4.5 7.5 4.5Q10 4.5 10 8Z" fill="#40a040"/></svg>
<div class="t" style="left:658.8px;top:90.8px;">Plans</div>
<div class="a" style="left:644.2px;top:100.5px;width:118.5px;height:10.5px;background:#fff;border:1px solid #606060;border-right:none;box-sizing:border-box"></div>
<div class="a" style="left:762.5px;top:100.5px;width:36px;height:10.5px;background:#d4d0c8;border-top:1px solid #606060;border-bottom:1px solid #606060;box-sizing:border-box"></div>
<svg class="a" style="left:646.5px;top:101.5px;" width="10" height="8.5" viewBox="0 0 10 8.5"><path d="M0.8 7.9L5.6 3.4" stroke="#3050b0" stroke-width="1.4"/><path d="M4.3 1.2H9.3L7.8 2.6H8.9L6.6 5L4.4 4.6Z" fill="#4870d0"/><path d="M4.8 0.3H9.6L9.1 1.2H4.4Z" fill="#203c98"/><path d="M5.3 2.4H7.2" stroke="#b8d0f8" stroke-width="0.6"/></svg>
<div class="t" style="left:658.8px;top:101px;font-weight:bold;letter-spacing:0.12px">Current Appraisals</div>
<div class="t" style="left:775.5px;top:101.2px;font-weight:bold;font-size:7.6px">5</div>
<div class="t" style="left:792px;top:101.2px;font-weight:bold;font-size:7.6px">5</div>
<div class="a" style="left:620px;top:219px;width:178.5px;height:14px;background:#ebe8e2"></div>
<div class="a" style="left:622.5px;top:219px;width:49px;height:13px;background:#d4d0c8;border-right:1px solid #404040;border-bottom:1px solid #404040;border-left:1px solid #fff;box-sizing:border-box"></div>
<div class="t" style="left:624.5px;top:222px;">Categories Bar</div>
<div class="t" style="left:673.5px;top:222px;color:#808080">Note</div>
<div class="a" style="left:691.3px;top:221px;width:0.8px;height:9px;background:#a0a0a0"></div>
<div class="a" style="left:620px;top:235.3px;width:178.5px;height:10px;background:#d4d0c8;border:1px solid #b8b4ac;border-radius:1.5px;box-sizing:border-box"></div>
<div class="t" style="left:622px;top:236px;">Filters Bar</div>
<div class="a" style="left:773.0px;top:237.8px;width:5px;height:5px;border:1px solid #000;border-radius:1px;box-sizing:border-box"></div>
<svg class="a" style="left:781.5px;top:237.3px;" width="5" height="6" viewBox="0 0 5 6"><path d="M1 0H4V3.5H5V4H3V6H2V4H0V3.5H1Z" fill="#000"/><rect x="1.5" y="0.5" width="1" height="3" fill="#fff"/></svg>
<svg class="a" style="left:790.0px;top:237.8px;" width="5.5" height="5.5" viewBox="0 0 5.5 5.5"><path d="M0.3 0.3L5.2 5.2M5.2 0.3L0.3 5.2" stroke="#505050" stroke-width="0.8"/></svg>
<div class="a" style="left:620px;top:247px;width:119px;height:13.5px;background:#d8d5ce"></div>
<div class="a" style="left:622px;top:249px;width:2px;height:9.5px;background:#b0aea8"></div>
<div class="a" style="left:625px;top:248.6px;width:57.5px;height:11px;background:#d4d0c8;border:1px solid #a8a4a0;box-sizing:border-box"></div>
<div class="t" style="left:627px;top:250px;color:#a0a0a0">Custom</div>
<svg class="a" style="left:677px;top:253px;" width="4" height="2.5" viewBox="0 0 4 2.5"><path d="M0 0H4L2 2.5Z" fill="#909090"/></svg>
<svg class="a" style="left:684px;top:249px;" width="11" height="10" viewBox="0 0 11 10"><rect x="5.5" y="0.8" width="4.5" height="4.5" fill="#fff" stroke="#a8b0c8" stroke-width="0.6"/><rect x="0.8" y="5" width="4.2" height="4.5" fill="#eef0ff" stroke="#8088c0" stroke-width="0.8"/><path d="M4 9.5Q5 5 9.5 3" stroke="#38a838" stroke-width="1.8" fill="none"/><path d="M7.5 1.8L10.5 2.5L9 5.3Z" fill="#38a838"/></svg>
<svg class="a" style="left:697px;top:252.5px;" width="4" height="2.5" viewBox="0 0 4 2.5"><path d="M0 0H4L2 2.5Z" fill="#000"/></svg>
<svg class="a" style="left:705px;top:249.5px;" width="10.5" height="9" viewBox="0 0 10.5 9"><path d="M1 6L5.5 1.5Q6.5 0.5 7.5 1.5L9.5 3.5Q10 4.5 9 5.5L6.5 8H2Z" fill="#f4f4f4" stroke="#909090" stroke-width="0.7"/><path d="M1 8.5H9" stroke="#a0a0a0" stroke-width="0.6"/></svg>
<svg class="a" style="left:720px;top:249.5px;" width="9" height="9" viewBox="0 0 9 9"><path d="M1.2 1.2L7.8 7.8M7.8 1.2L1.2 7.8" stroke="#b0b0b0" stroke-width="2.2"/><path d="M1.2 1.2L7.8 7.8M7.8 1.2L1.2 7.8" stroke="#d8d8d8" stroke-width="0.8"/></svg>
<svg class="a" style="left:733px;top:257px;" width="4" height="2.5" viewBox="0 0 4 2.5"><path d="M0 0H4L2 2.5Z" fill="#000"/></svg>
<div class="a" style="left:620px;top:262px;width:178.5px;height:324.5px;background:#d4d0c8;border:1px solid #606060;border-right-color:#909090;border-bottom-color:#808080;box-sizing:border-box"></div>
<div class="t" style="left:632px;top:263.90000000000003px;">Completion</div>
<div class="a" style="left:622px;top:274.6px;width:176px;height:0;border-top:1px dashed #c4c0b8"></div>
<svg class="a" style="left:790px;top:267.6px;" width="4.5" height="2.5" viewBox="0 0 4.5 2.5"><path d="M0 0H4.5L2.25 2.5Z" fill="#000"/></svg>
<div class="t" style="left:632px;top:276.15000000000003px;">Due Date</div>
<div class="a" style="left:622px;top:286.85px;width:176px;height:0;border-top:1px dashed #c4c0b8"></div>
<svg class="a" style="left:790px;top:279.85px;" width="4.5" height="2.5" viewBox="0 0 4.5 2.5"><path d="M0 0H4.5L2.25 2.5Z" fill="#000"/></svg>
<div class="t" style="left:632px;top:288.40000000000003px;">Status</div>
<div class="a" style="left:622px;top:299.1px;width:176px;height:0;border-top:1px dashed #c4c0b8"></div>
<svg class="a" style="left:790px;top:292.1px;" width="4.5" height="2.5" viewBox="0 0 4.5 2.5"><path d="M0 0H4.5L2.25 2.5Z" fill="#000"/></svg>
<div class="t" style="left:632px;top:300.65000000000003px;">Priority</div>
<div class="a" style="left:622px;top:311.35px;width:176px;height:0;border-top:1px dashed #c4c0b8"></div>
<svg class="a" style="left:790px;top:304.35px;" width="4.5" height="2.5" viewBox="0 0 4.5 2.5"><path d="M0 0H4.5L2.25 2.5Z" fill="#000"/></svg>
<div class="t" style="left:632px;top:312.90000000000003px;">Task Name</div>
<div class="a" style="left:622px;top:323.6px;width:176px;height:0;border-top:1px dashed #c4c0b8"></div>
<div class="t" style="left:632px;top:325.15000000000003px;">Date Created</div>
<div class="a" style="left:622px;top:335.85px;width:176px;height:0;border-top:1px dashed #c4c0b8"></div>
<svg class="a" style="left:790px;top:328.85px;" width="4.5" height="2.5" viewBox="0 0 4.5 2.5"><path d="M0 0H4.5L2.25 2.5Z" fill="#000"/></svg>
<div class="t" style="left:632px;top:337.40000000000003px;">Date Last Modifi</div>
<div class="a" style="left:622px;top:348.1px;width:176px;height:0;border-top:1px dashed #c4c0b8"></div>
<svg class="a" style="left:790px;top:341.1px;" width="4.5" height="2.5" viewBox="0 0 4.5 2.5"><path d="M0 0H4.5L2.25 2.5Z" fill="#000"/></svg>
<div class="t" style="left:632px;top:349.65000000000003px;">Date Opened</div>
<div class="a" style="left:622px;top:360.35px;width:176px;height:0;border-top:1px dashed #c4c0b8"></div>
<svg class="a" style="left:790px;top:353.35px;" width="4.5" height="2.5" viewBox="0 0 4.5 2.5"><path d="M0 0H4.5L2.25 2.5Z" fill="#000"/></svg>
<div class="t" style="left:632px;top:361.90000000000003px;">Date Completed</div>
<svg class="a" style="left:790px;top:365.6px;" width="4.5" height="2.5" viewBox="0 0 4.5 2.5"><path d="M0 0H4.5L2.25 2.5Z" fill="#000"/></svg>
<div class="a" style="left:622px;top:373px;width:176px;height:1px;background:#808080"></div>
<div class="a" style="left:682.3px;top:263.5px;width:1px;height:109.5px;background:#808080;border-right:1px solid #ecebe6"></div>
<div class="a" style="left:43px;top:144px;width:282px;height:242px;background:#d4d0c8;border:1px solid #d4d0c8;border-right-color:#404040;border-bottom-color:#404040;box-shadow:inset 1px 1px #fff, inset -1px -1px #808080;box-sizing:border-box"></div>
<div class="a" style="left:45px;top:146px;width:277px;height:10.3px;background:linear-gradient(to right,#0a246a,#a6caf0)"></div>
<div class="t" style="left:46px;top:147px;font-weight:bold;color:#fff;font-size:7.2px;letter-spacing:-0.1px">Edit Task</div>
<div class="a" style="left:312px;top:147px;width:10px;height:8px;background:#d4d0c8;border-right:1px solid #404040;border-bottom:1px solid #404040;box-shadow:inset -1px -1px #808080, inset 1px 1px #fff;box-sizing:border-box"></div>
<svg class="a" style="left:314.5px;top:148.8px;" width="5" height="4.5" viewBox="0 0 5 4.5"><path d="M0.5 0.3L4.5 4.2M4.5 0.3L0.5 4.2" stroke="#000" stroke-width="1.2"/></svg>
<div class="a" style="left:50px;top:161.7px;width:267.5px;height:12.8px;background:#ebe8e2"></div>
<div class="a" style="left:50px;top:174px;width:267.5px;height:1px;background:#404040"></div>
<div class="a" style="left:52.5px;top:163px;width:30.5px;height:12px;background:#d4d0c8;border:1px solid #404040;border-bottom:none;border-radius:2px 1px 0 0;box-sizing:border-box;box-shadow:inset 1px 1px #fff"></div>
<div class="a" style="left:50px;top:172.8px;width:3px;height:1.2px;background:#404040"></div>
<div class="t" style="left:56.5px;top:164.8px;letter-spacing:-0.25px;">General</div>
<div class="t" style="left:86px;top:164.8px;letter-spacing:-0.25px;">Reminder</div>
<div class="a" style="left:117px;top:164px;width:0.8px;height:9px;background:#808080"></div>
<div class="t" style="left:120px;top:164.8px;letter-spacing:-0.25px;">Hyperlink</div>
<div class="a" style="left:150.5px;top:164px;width:0.8px;height:9px;background:#808080"></div>
<div class="t" style="left:153.5px;top:164.8px;letter-spacing:-0.25px;">Note</div>
<div class="a" style="left:171.3px;top:164px;width:0.8px;height:9px;background:#808080"></div>
<div class="t" style="left:174.5px;top:164.8px;letter-spacing:-0.25px;">Info</div>
<div class="t" style="left:60px;top:181px;letter-spacing:-0.25px;">Task:</div>
<div class="a" style="left:83.5px;top:181px;width:207px;height:10px;background:#fff;border:1px solid #9c988f;border-radius:1px;box-sizing:border-box"></div>
<div class="t" style="left:85.5px;top:181.3px;letter-spacing:-0.25px;letter-spacing:-0.22px">Create quarter report on rental valuations</div>
<div class="t" style="left:60px;top:199.9px;letter-spacing:-0.25px;">Priority:</div>
<div class="a" style="left:84px;top:198.5px;width:66.5px;height:11px;background:#fff;border:1px solid #9c988f;border-radius:1px;box-sizing:border-box"></div>
<div class="a" style="left:140px;top:199.5px;width:8.8px;height:9px;background:#e2e0da"></div>
<svg class="a" style="left:142.2px;top:202.8px;" width="4.6" height="2.6" viewBox="0 0 4.6 2.6"><path d="M0 0H4.6L2.3 2.6Z" fill="#000"/></svg>
<svg class="a" style="left:85.3px;top:199px;" width="10.5" height="10.5" viewBox="0 0 10.5 10.5"><defs><radialGradient id="pg2" cx="0.5" cy="0.5" r="0.5"><stop offset="0" stop-color="#fff8e8"/><stop offset="0.35" stop-color="#ffe0b0"/><stop offset="0.5" stop-color="#f0a050"/><stop offset="0.85" stop-color="#e07010"/><stop offset="1" stop-color="#c06010"/></radialGradient></defs><circle cx="5.25" cy="5.25" r="5" fill="url(#pg2)"/></svg>
<div class="t" style="left:98.4px;top:198.9px;letter-spacing:-0.25px;">Normal</div>
<div class="t" style="left:159.7px;top:200px;letter-spacing:-0.25px;">Category:</div>
<div class="a" style="left:194px;top:198.5px;width:96.5px;height:11px;background:#fff;border:1px solid #9c988f;border-radius:1px;box-sizing:border-box"></div>
<div class="a" style="left:279.7px;top:199.5px;width:8.8px;height:9px;background:#e2e0da"></div>
<svg class="a" style="left:281.9px;top:202.8px;" width="4.6" height="2.6" viewBox="0 0 4.6 2.6"><path d="M0 0H4.6L2.3 2.6Z" fill="#000"/></svg>
<div class="t" style="left:195.5px;top:199.3px;letter-spacing:-0.25px;">Current Appraisals</div>
<div class="t" style="left:60px;top:213.5px;letter-spacing:-0.25px;">Note:</div>
<div class="a" style="left:60.4px;top:224.4px;width:229.2px;height:37px;background:#fff;border:1px solid #9c988f;border-radius:1px;box-sizing:border-box"></div>
<div class="t" style="left:60px;top:272.3px;letter-spacing:-0.25px;">Status:</div>
<div class="a" style="left:83.2px;top:271px;width:74.2px;height:11.5px;background:#fff;border:1px solid #9c988f;border-radius:1px;box-sizing:border-box"></div>
<div class="a" style="left:147.5px;top:272px;width:8.8px;height:9.5px;background:#e2e0da"></div>
<svg class="a" style="left:149.7px;top:275.55px;" width="4.6" height="2.6" viewBox="0 0 4.6 2.6"><path d="M0 0H4.6L2.3 2.6Z" fill="#000"/></svg>
<svg class="a" style="left:85px;top:272px;" width="9" height="10" viewBox="0 0 9 10"><defs><linearGradient id="dg2" x1="0" y1="0" x2="1" y2="1"><stop offset="0" stop-color="#ffffff"/><stop offset="1" stop-color="#a8d0f0"/></linearGradient></defs><path d="M0.5 0.5H6L8.3 2.8V9.3H0.5Z" fill="url(#dg2)" stroke="#90a8d0" stroke-width="0.7"/><path d="M6 0.5V2.8H8.3" fill="#6088c0"/></svg>
<div class="t" style="left:97px;top:271.6px;letter-spacing:-0.25px;">Created</div>
<div class="t" style="left:171px;top:272.5px;letter-spacing:-0.25px;">Complete(%):</div>
<div class="a" style="left:213px;top:271.3px;width:54.2px;height:11.2px;background:#fff;border:1px solid #9c988f;border-radius:1px;box-sizing:border-box"></div>
<div class="t" style="left:215px;top:271.8px;letter-spacing:-0.25px;">0</div>
<div class="a" style="left:240px;top:272.3px;width:8px;height:9px;background:#d8d5ce"></div>
<div class="a" style="left:249px;top:272.3px;width:8.5px;height:9px;background:#d8d5ce"></div>
<div class="a" style="left:258.5px;top:272.3px;width:8px;height:9px;background:#d8d5ce"></div>
<div class="a" style="left:249px;top:276.6px;width:8.5px;height:0.6px;background:#fff"></div>
<svg class="a" style="left:241.8px;top:275px;" width="4.5" height="3.5" viewBox="0 0 4.5 3.5"><path d="M0 1.75L2 0V3.5Z M2.3 1.75L4.3 0V3.5Z" fill="#000"/></svg>
<svg class="a" style="left:251px;top:273.3px;" width="4.5" height="7" viewBox="0 0 4.5 7"><path d="M2.25 0.3L4.3 2.3H0.2Z M2.25 6.7L4.3 4.7H0.2Z" fill="#000"/></svg>
<svg class="a" style="left:260.3px;top:275px;" width="4.5" height="3.5" viewBox="0 0 4.5 3.5"><path d="M4.3 1.75L2.3 0V3.5Z M2 1.75L0 0V3.5Z" fill="#000"/></svg>
<div class="a" style="left:270px;top:270px;width:15.7px;height:14.8px;background:#d4d0c8;border:1px solid #303030;box-sizing:border-box"></div>
<svg class="a" style="left:272.3px;top:271.9px;" width="11" height="11" viewBox="0 0 11 11"><circle cx="5.5" cy="5.5" r="5" fill="#f09030"/><circle cx="5.5" cy="5.5" r="3.6" fill="#ffb868"/><path d="M3.6 5.6L5.2 7L7.6 4" stroke="#fff" stroke-width="0.9" fill="none"/></svg>
<div class="t" style="left:60px;top:291.2px;letter-spacing:-0.25px;">Estimated time:</div>
<div class="a" style="left:105.4px;top:291px;width:52px;height:11.3px;background:#fff;border:1px solid #9c988f;border-radius:1px;box-sizing:border-box"></div>
<div class="a" style="left:147.5px;top:292px;width:8.8px;height:9.3px;background:#e2e0da"></div>
<svg class="a" style="left:149.7px;top:295.45px;" width="4.6" height="2.6" viewBox="0 0 4.6 2.6"><path d="M0 0H4.6L2.3 2.6Z" fill="#000"/></svg>
<div class="t" style="left:107px;top:291.5px;letter-spacing:-0.25px;">0 minutes</div>
<div class="t" style="left:174.4px;top:291.2px;letter-spacing:-0.25px;">Actual time:</div>
<div class="a" style="left:212.2px;top:291px;width:52.3px;height:11.3px;background:#fff;border:1px solid #9c988f;border-radius:1px;box-sizing:border-box"></div>
<div class="a" style="left:254.5px;top:292px;width:8.8px;height:9.3px;background:#e2e0da"></div>
<svg class="a" style="left:256.7px;top:295.45px;" width="4.6" height="2.6" viewBox="0 0 4.6 2.6"><path d="M0 0H4.6L2.3 2.6Z" fill="#000"/></svg>
<div class="t" style="left:214px;top:291.5px;letter-spacing:-0.25px;">0 minutes</div>
<div class="a" style="left:61px;top:309.6px;width:7px;height:7px;background:#fff;border:1px solid #a0a0a0;box-sizing:border-box"></div>
<svg class="a" style="left:62px;top:310.6px;" width="5" height="5" viewBox="0 0 5 5"><path d="M0.6 2.2L2 3.7L4.6 0.9" stroke="#000" stroke-width="1.2" fill="none"/></svg>
<div class="t" style="left:71px;top:307.5px;letter-spacing:-0.25px;">Due date</div>
<div class="a" style="left:101px;top:314px;width:190px;height:1.6px;background:#56648e"></div>
<svg class="a" style="left:73.5px;top:324.5px;" width="8" height="8" viewBox="0 0 8 8"><circle cx="4" cy="4" r="3.5" fill="#fff" stroke="#a8a8a8" stroke-width="0.7"/><circle cx="4" cy="4" r="1.3" fill="#000"/></svg>
<div class="t" style="left:85px;top:323.7px;letter-spacing:-0.25px;">Once</div>
<svg class="a" style="left:73.5px;top:340.7px;" width="8" height="8" viewBox="0 0 8 8"><circle cx="4" cy="4" r="3.5" fill="#fff" stroke="#a8a8a8" stroke-width="0.7"/></svg>
<div class="t" style="left:85px;top:340.2px;letter-spacing:-0.25px;">Recurrence</div>
<div class="a" style="left:128.2px;top:322.8px;width:74.3px;height:10.5px;background:#fff;border:1px solid #6a88b8;box-sizing:border-box"></div>
<div class="a" style="left:193px;top:323.8px;width:8.5px;height:8.5px;background:#dcd9d2"></div>
<svg class="a" style="left:194.9px;top:327px;" width="4.6" height="2.6" viewBox="0 0 4.6 2.6"><path d="M0 0H4.6L2.3 2.6Z" fill="#000"/></svg>
<div class="t" style="left:130px;top:323.5px;letter-spacing:-0.25px;">30.08.2015</div>
<div class="a" style="left:209.2px;top:323.3px;width:61.1px;height:10px;background:#fff;border:1px solid #9c988f;border-radius:1px;box-sizing:border-box"></div>
<div class="t" style="left:211px;top:323.5px;letter-spacing:-0.25px;">20:45:45</div>
<div class="a" style="left:261px;top:324.3px;width:8.3px;height:8px;background:#d4d0c8"></div>
<svg class="a" style="left:263px;top:325px;" width="4.5" height="6.5" viewBox="0 0 4.5 6.5"><path d="M2.25 0L4.5 2.2H0Z M2.25 6.5L4.5 4.3H0Z" fill="#000"/></svg>
<div class="a" style="left:200px;top:339.4px;width:70.8px;height:11.4px;background:#d4d0c8;border:1px solid #b8b4ac;border-right-color:#fff;border-bottom-color:#fff;box-sizing:border-box"></div>
<div class="t" style="left:250px;top:339.5px;color:#909090">...</div>
<svg class="a" style="left:259px;top:340.5px;" width="10" height="9" viewBox="0 0 10 9"><path d="M5 0.5L9.5 4.5L5 8.5L0.5 4.5Z" fill="#909090" stroke="#b0b0b0" stroke-width="0.5"/></svg>
<div class="t" style="left:50px;top:364.5px;letter-spacing:-0.25px;">Hint: Use shortcut Ctrl+Tab to switch between</div>
<div class="t" style="left:50px;top:371.3px;letter-spacing:-0.25px;">pages</div>
<div class="a" style="left:210px;top:365.7px;width:48.5px;height:14px;background:#d4d0c8;border:1px solid #fff;border-right-color:#808080;border-bottom-color:#808080;box-sizing:border-box"></div>
<svg class="a" style="left:226px;top:369px;" width="9" height="7" viewBox="0 0 9 7"><path d="M1 3.5L3.5 6L8 1" stroke="#a0a0a0" stroke-width="1.4" fill="none"/></svg>
<div class="t" style="left:238px;top:368.5px;letter-spacing:-0.25px;color:#a0a0a0">Ok</div>
<div class="a" style="left:269.4px;top:365px;width:47px;height:14.7px;background:#d4d0c8;border:1px solid #202020;box-sizing:border-box;box-shadow:inset 1px 1px #fff,inset -1px -1px #808080"></div>
<svg class="a" style="left:277.5px;top:368.5px;" width="8" height="8" viewBox="0 0 8 8"><path d="M1 1L7 7M7 1L1 7" stroke="#e03020" stroke-width="2"/></svg>
<div class="t" style="left:288px;top:368.3px;letter-spacing:-0.25px;">Cancel</div>
<div class="a" style="left:128.2px;top:334.5px;width:94.6px;height:92.2px;background:#fff;border:1px solid #404040;box-sizing:border-box"></div>
<div class="a" style="left:129px;top:335.2px;width:93px;height:9.4px;background:#d4d0c8;border-bottom:1px solid #808080;box-sizing:border-box"></div>
<svg class="a" style="left:132px;top:337.5px;" width="3.5" height="5" viewBox="0 0 3.5 5"><path d="M3 0V5L0.5 2.5Z" fill="#000"/></svg>
<svg class="a" style="left:177.5px;top:337.5px;" width="3.5" height="5" viewBox="0 0 3.5 5"><path d="M0.5 0V5L3 2.5Z" fill="#000"/></svg>
<svg class="a" style="left:188px;top:337.5px;" width="3.5" height="5" viewBox="0 0 3.5 5"><path d="M3 0V5L0.5 2.5Z" fill="#000"/></svg>
<svg class="a" style="left:216.5px;top:337.5px;" width="3.5" height="5" viewBox="0 0 3.5 5"><path d="M0.5 0V5L3 2.5Z" fill="#000"/></svg>
<div class="t" style="left:145.3px;top:335.5px;letter-spacing:-0.25px;letter-spacing:0px">Август</div>
<div class="t" style="left:196px;top:335.5px;letter-spacing:-0.25px;letter-spacing:0px">2015</div>
<div class="t" style="left:137.4px;top:344.6px;width:12.0px;text-align:center;font-size:6.8px">П</div>
<div class="t" style="left:149px;top:344.6px;width:12px;text-align:center;font-size:6.8px">В</div>
<div class="t" style="left:160px;top:344.6px;width:12px;text-align:center;font-size:6.8px">С</div>
<div class="t" style="left:171.2px;top:344.6px;width:12.0px;text-align:center;font-size:6.8px">Ч</div>
<div class="t" style="left:182.6px;top:344.6px;width:12.0px;text-align:center;font-size:6.8px">П</div>
<div class="t" style="left:193.8px;top:344.6px;width:12.0px;text-align:center;font-size:6.8px">С</div>
<div class="t" style="left:205px;top:344.6px;width:12px;text-align:center;font-size:6.8px">В</div>
<div class="a" style="left:136px;top:354px;width:79px;height:0.8px;background:#a0a0a0"></div>
<div class="a" style="left:136px;top:407.6px;width:79px;height:0.8px;background:#a0a0a0"></div>
<div class="t" style="left:132.4px;top:354.5px;width:13.6px;text-align:right;color:#a0a0a0">27</div>
<div class="t" style="left:143.67000000000002px;top:354.5px;width:13.6px;text-align:right;color:#a0a0a0">28</div>
<div class="t" style="left:154.94px;top:354.5px;width:13.6px;text-align:right;color:#a0a0a0">29</div>
<div class="t" style="left:166.21px;top:354.5px;width:13.6px;text-align:right;color:#a0a0a0">30</div>
<div class="t" style="left:177.48000000000002px;top:354.5px;width:13.6px;text-align:right;color:#a0a0a0">31</div>
<div class="t" style="left:188.75px;top:354.5px;width:13.6px;text-align:right;">1</div>
<div class="t" style="left:200.02px;top:354.5px;width:13.6px;text-align:right;">2</div>
<div class="t" style="left:132.4px;top:363.3px;width:13.6px;text-align:right;">3</div>
<div class="t" style="left:143.67000000000002px;top:363.3px;width:13.6px;text-align:right;">4</div>
<div class="t" style="left:154.94px;top:363.3px;width:13.6px;text-align:right;">5</div>
<div class="t" style="left:166.21px;top:363.3px;width:13.6px;text-align:right;">6</div>
<div class="t" style="left:177.48000000000002px;top:363.3px;width:13.6px;text-align:right;">7</div>
<div class="t" style="left:188.75px;top:363.3px;width:13.6px;text-align:right;">8</div>
<div class="t" style="left:200.02px;top:363.3px;width:13.6px;text-align:right;">9</div>
<div class="t" style="left:132.4px;top:372.1px;width:13.6px;text-align:right;">10</div>
<div class="t" style="left:143.67000000000002px;top:372.1px;width:13.6px;text-align:right;">11</div>
<div class="t" style="left:154.94px;top:372.1px;width:13.6px;text-align:right;">12</div>
<div class="t" style="left:166.21px;top:372.1px;width:13.6px;text-align:right;">13</div>
<div class="t" style="left:177.48000000000002px;top:372.1px;width:13.6px;text-align:right;">14</div>
<div class="t" style="left:188.75px;top:372.1px;width:13.6px;text-align:right;">15</div>
<div class="t" style="left:200.02px;top:372.1px;width:13.6px;text-align:right;">16</div>
<div class="t" style="left:132.4px;top:380.9px;width:13.6px;text-align:right;">17</div>
<div class="t" style="left:143.67000000000002px;top:380.9px;width:13.6px;text-align:right;">18</div>
<div class="t" style="left:154.94px;top:380.9px;width:13.6px;text-align:right;">19</div>
<div class="t" style="left:166.21px;top:380.9px;width:13.6px;text-align:right;">20</div>
<div class="t" style="left:177.48000000000002px;top:380.9px;width:13.6px;text-align:right;">21</div>
<div class="t" style="left:188.75px;top:380.9px;width:13.6px;text-align:right;">22</div>
<div class="t" style="left:200.02px;top:380.9px;width:13.6px;text-align:right;">23</div>
<div class="t" style="left:132.4px;top:389.7px;width:13.6px;text-align:right;">24</div>
<div class="t" style="left:143.67000000000002px;top:389.7px;width:13.6px;text-align:right;">25</div>
<div class="t" style="left:154.94px;top:389.7px;width:13.6px;text-align:right;">26</div>
<div class="t" style="left:166.21px;top:389.7px;width:13.6px;text-align:right;">27</div>
<div class="t" style="left:177.48000000000002px;top:389.7px;width:13.6px;text-align:right;">28</div>
<div class="t" style="left:188.75px;top:389.7px;width:13.6px;text-align:right;">29</div>
<div class="a" style="left:203.7px;top:390.1px;width:11.6px;height:8.7px;background:#0a246a"></div>
<div class="t" style="left:200.02px;top:389.7px;width:13.6px;text-align:right;color:#fff">30</div>
<div class="t" style="left:132.4px;top:398.5px;width:13.6px;text-align:right;">31</div>
<div class="t" style="left:143.67000000000002px;top:398.5px;width:13.6px;text-align:right;color:#a0a0a0">1</div>
<div class="t" style="left:154.94px;top:398.5px;width:13.6px;text-align:right;color:#a0a0a0">2</div>
<div class="t" style="left:166.21px;top:398.5px;width:13.6px;text-align:right;color:#a0a0a0">3</div>
<div class="t" style="left:177.48000000000002px;top:398.5px;width:13.6px;text-align:right;color:#a0a0a0">4</div>
<div class="t" style="left:188.75px;top:398.5px;width:13.6px;text-align:right;color:#a0a0a0">5</div>
<div class="t" style="left:200.02px;top:398.5px;width:13.6px;text-align:right;color:#a0a0a0">6</div>
<div class="a" style="left:160.4px;top:410.8px;width:30.5px;height:11.8px;background:#d4d0c8;border:1px solid #404040;box-shadow:inset 1px 1px #fff,inset -1px -1px #808080;box-sizing:border-box"></div>
<div class="t" style="left:160.4px;top:412.5px;width:30.5px;text-align:center;">Today</div>
</div></body></html>
